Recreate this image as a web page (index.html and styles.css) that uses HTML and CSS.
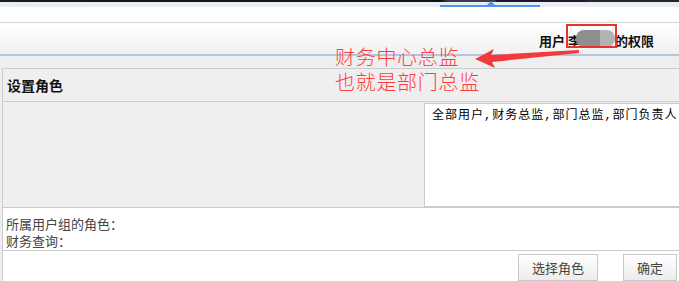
FILE: index.html
```html
<!DOCTYPE html>
<html lang="zh-CN">
<head>
    <meta charset="UTF-8">
    <title>设置角色</title>
    <link rel="stylesheet" href="styles.css">
</head>
<body>
    <div class="top-strip"></div>
    <div class="tab-bar">
        <div class="tab-active"></div>
    </div>
    <div class="blank"></div>

    <div class="user-bar">
        <span class="user-title">用户 <span class="user-name">李<span class="blur-a"></span><span class="blur-b"></span><span class="mark-box"></span></span>的权限</span>
    </div>

    <div class="content">
        <div class="note">
            <p>财务中心总监</p>
            <p>也就是部门总监</p>
        </div>
        <svg class="note-arrow" width="679" height="80" viewBox="0 0 679 80">
            <polygon points="475,59 494,49 491,55 579,50 579,53 492,62 495,68" fill="#f23a3a"/>
        </svg>

        <div class="panel">
            <div class="panel-head">设置角色</div>
            <div class="role-row">
                <div class="role-label"></div>
                <div class="role-box">全部用户,财务总监,部门总监,部门负责人</div>
            </div>
            <div class="info-row">
                <p>所属用户组的角色：</p>
                <p>财务查询：</p>
            </div>
            <div class="btn-row">
                <button type="button" class="btn">选择角色</button>
                <button type="button" class="btn">确定</button>
            </div>
        </div>
    </div>
</body>
</html>
```

FILE: styles.css
```css
body {
    margin: 0;
    font-family: "Noto Sans CJK SC", "Noto Sans", sans-serif;
    font-size: 13px;
    color: #222;
    background-color: #fff;
    overflow: hidden;
}
p {
    margin: 0;
}
.top-strip {
    height: 2px;
    background: linear-gradient(to right, #1a1a1a 0, #111 440px, #3a4050 448px, #3a4050 495px, #1c1430 497px, #1c1430 585px, #262626 586px);
}
.tab-bar {
    height: 5px;
    background-color: #e9eef4;
    padding-left: 440px;
    display: flex;
    align-items: flex-end;
}
.tab-active {
    position: relative;
    width: 100px;
    height: 2px;
    background-color: #4d94ec;
}
.tab-active::after {
    content: "";
    position: absolute;
    left: 47px;
    bottom: 2px;
    border-left: 4px solid transparent;
    border-right: 4px solid transparent;
    border-bottom: 4px solid #4d94ec;
}
.blank {
    height: 15px;
}
.user-bar {
    height: 34px;
    box-sizing: border-box;
    border-top: 1px solid #d4d4d4;
    border-bottom: 2px solid #b6c6e2;
    background: linear-gradient(#ffffff, #f1f1f1);
    display: flex;
    justify-content: flex-end;
    align-items: center;
    padding-right: 25px;
    padding-top: 4px;
}
.user-title {
    font-weight: bold;
    font-size: 13px;
    color: #111;
}
.user-name {
    position: relative;
    display: inline-flex;
    align-items: center;
}
.blur-a {
    position: relative;
    top: -2px;
    display: inline-block;
    width: 24px;
    height: 17px;
    margin-left: -5px;
    background-color: #8e8e8e;
    border-radius: 8px 0 0 8px;
}
.blur-b {
    position: relative;
    top: -2px;
    display: inline-block;
    width: 15px;
    height: 17px;
    background-color: #b3b3b3;
    border-radius: 0 8px 8px 0;
}
.mark-box {
    position: absolute;
    left: -2px;
    top: -7px;
    width: 47px;
    height: 20px;
    border: 2px solid #e83232;
}
.content {
    position: relative;
    background-color: #eeeeee;
    padding: 12px 0 0 2px;
}
.note {
    position: absolute;
    left: 335px;
    top: -12px;
    color: #ff3c3c;
    font-size: 20px;
    line-height: 25px;
    letter-spacing: 0.7px;
    font-weight: 300;
}
.note-arrow {
    position: absolute;
    left: 0;
    top: -56px;
    z-index: 2;
}
.panel {
    border: 1px solid #cccccc;
    border-right: none;
    background-color: #fff;
}
.panel-head {
    height: 32px;
    line-height: 32px;
    padding-left: 4px;
    font-weight: bold;
    font-size: 14px;
    color: #111;
    background-color: #efefef;
    border-bottom: 1px solid #cccccc;
}
.role-row {
    display: grid;
    grid-template-columns: 421px 1fr;
    padding-top: 1px;
    height: 106px;
    box-sizing: border-box;
    background-color: #efefef;
    border-bottom: 1px solid #cccccc;
}
.role-box {
    height: 104px;
    box-sizing: border-box;
    border: 1px solid #cccccc;
    border-right: none;
    background-color: #fff;
    padding: 4px 7px;
    font-family: "Liberation Mono", "Noto Sans CJK SC", monospace;
    font-size: 12px;
    line-height: 16px;
    letter-spacing: 1px;
    white-space: nowrap;
    overflow: hidden;
    color: #000;
}
.info-row {
    height: 43px;
    box-sizing: border-box;
    padding: 7px 0 0 3px;
    line-height: 17px;
    color: #444;
    border-bottom: 1px solid #cccccc;
}
.btn-row {
    display: flex;
    justify-content: flex-end;
    gap: 25px;
    padding: 3px 2px 0 0;
    height: 40px;
}
.btn {
    height: 27px;
    padding: 0 13px;
    font-family: "Noto Sans CJK SC", sans-serif;
    font-size: 13px;
    color: #444;
    border: 1px solid #c8c8c8;
    background: linear-gradient(#ffffff, #ececec);
    border-radius: 0;
    white-space: nowrap;
}
```
